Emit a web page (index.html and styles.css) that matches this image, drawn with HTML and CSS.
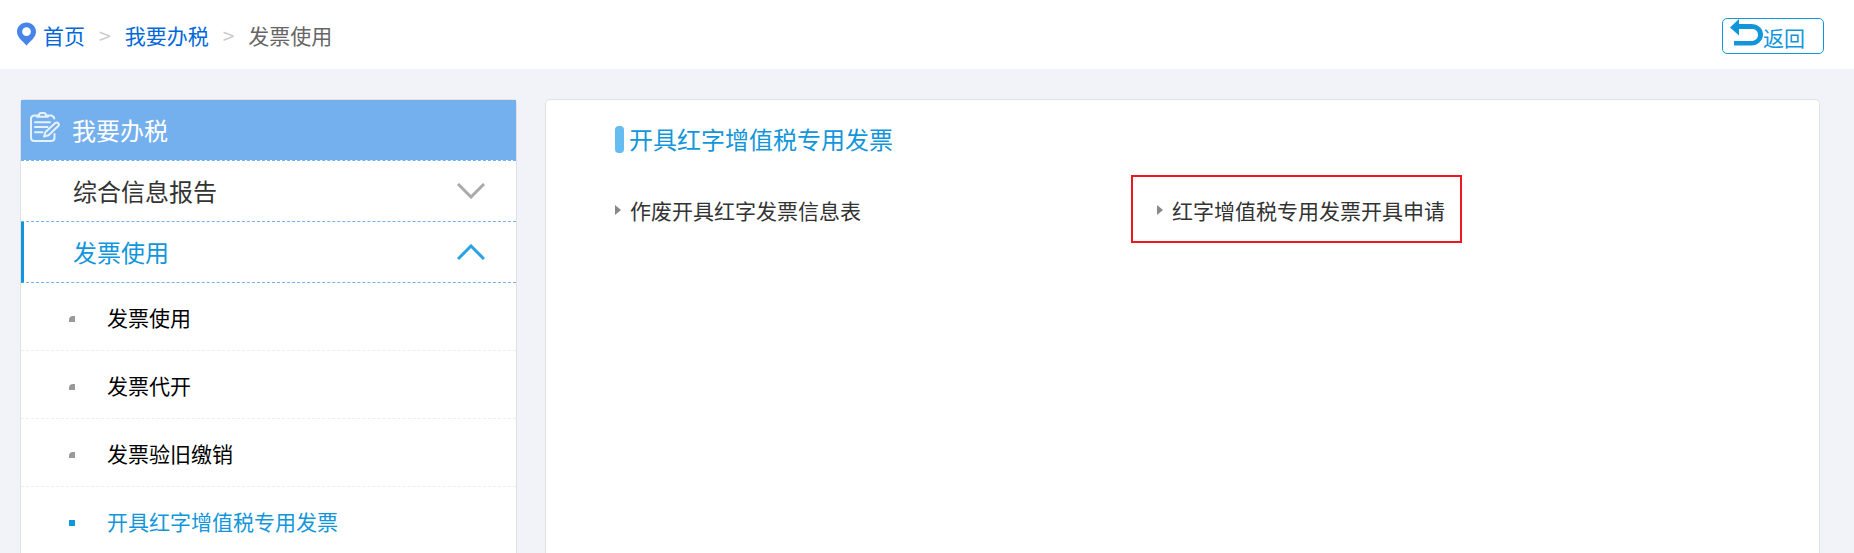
FILE: index.html
```html
<!DOCTYPE html>
<html lang="zh-CN">
<head>
<meta charset="utf-8">
<title>发票使用</title>
<link rel="stylesheet" href="styles.css">
</head>
<body>
<header class="topbar">
  <nav class="breadcrumb" aria-label="breadcrumb">
    <svg class="pin" viewBox="0 0 20 24" aria-hidden="true"><path fill="#4785ea" fill-rule="evenodd" d="M10 0C4.400 0 0 4.300 0 9.600 0 15.200 5.500 19.200 10 24c4.500-4.800 10-8.800 10-14.400C20 4.300 15.600 0 10 0zm0 4.900a4.600 4.600 0 1 1 0 9.200 4.600 4.600 0 0 1 0-9.200z"/></svg>
    <a href="#">首页</a>
    <span class="sep">&gt;</span>
    <a href="#">我要办税</a>
    <span class="sep">&gt;</span>
    <span class="current">发票使用</span>
  </nav>
  <button class="back" type="button">
    <svg class="back-icon" viewBox="0 0 33 27" aria-hidden="true"><path fill="#1296db" d="M0 8.500 9 0v5h12c7 0 12 4.500 12 10.500S28 26.500 21 26.500H4V22h17c4.500 0 7-3 7-6.300C28 12 25.500 10 21 10H9v6.500z"/></svg>
    <span class="back-text">返回</span>
  </button>
</header>
<div class="layout">
  <aside class="panel sidebar">
    <h2 class="side-title">
      <svg class="clip" viewBox="0 0 30 30" fill="none" stroke="#e6f1fd" stroke-width="2" stroke-linecap="round" stroke-linejoin="round" aria-hidden="true"><path d="M7 3.500H4.500Q1 3.500 1 7v18.500Q1 29 4.500 29h16.500q3.500 0 3.500-3.500V22M18 3.500h2.500Q23.500 3.500 24.300 6.500M7 4.800V3.500h2q0-2.500 2-2.500h3q2 0 2 2.500h2v1.300zM5 10.300h15M5 15h12.500M5 20.300h7.500M14 24.500l1.500-4.500L25.500 10.800q1.500-.8 2.700.4t.3 2.600L18.500 23.300z"/></svg>
      <span>我要办税</span>
    </h2>
    <button class="group" type="button">
      <span>综合信息报告</span>
      <svg class="chevron" viewBox="0 0 28 16" aria-hidden="true"><path d="M1 1l13 13L27 1"/></svg>
    </button>
    <button class="group open" type="button" aria-expanded="true">
      <span>发票使用</span>
      <svg class="chevron" viewBox="0 0 28 16" aria-hidden="true"><path d="M1 15L14 2 27 15"/></svg>
    </button>
    <ul class="sub">
      <li><a href="#">发票使用</a></li>
      <li><a href="#">发票代开</a></li>
      <li><a href="#">发票验旧缴销</a></li>
      <li><a class="active" href="#">开具红字增值税专用发票</a></li>
    </ul>
  </aside>
  <main class="panel content">
    <h1 class="title">开具红字增值税专用发票</h1>
    <ul class="links">
      <li><a href="#">作废开具红字发票信息表</a></li>
      <li><a class="marked" href="#">红字增值税专用发票开具申请</a></li>
    </ul>
  </main>
</div>
</body>
</html>
```
FILE: styles.css
```css
* { box-sizing: border-box; }
html, body { height: 100%; }
body {
  margin: 0;
  display: flex;
  flex-direction: column;
  overflow: hidden;
  background: #f2f3f8;
  color: #333;
  font: 21px/30px "Noto Sans CJK SC", sans-serif;
}
h1, h2, ul { margin: 0; padding: 0; font-weight: 400; }
ul { list-style: none; }
a { color: inherit; text-decoration: none; }
button { font: inherit; color: inherit; background: none; border: 0; padding: 0; cursor: pointer; }
svg { display: block; flex: none; }

.topbar {
  display: flex;
  justify-content: space-between;
  align-items: center;
  flex: none;
  height: 69px;
  padding: 2px 30px 0 17px;
  background: #fff;
}
.breadcrumb { display: flex; align-items: center; gap: 14px; padding-bottom: 2px; }
.breadcrumb a { color: #0268da; }
.pin { width: 19px; height: 24px; margin: 0 -7px 2px 0; }
.sep { color: #ccc; }
.current { color: #666; }
.back {
  display: flex;
  width: 102px;
  height: 36px;
  padding-left: 7px;
  border: 1px solid #1296db;
  border-radius: 5px;
  color: #1296db;
}
.back-icon { width: 33px; height: 27px; }
.back-text { padding-top: 3px; }

.layout {
  flex: 1 0 auto;
  display: grid;
  grid-template-columns: 497fr 1275fr;
  gap: 28px;
  padding: 30px 34px 0 20px;
}
.panel {
  background: #fff;
  border: 1px solid #dfe1e2;
  border-bottom: 0;
  border-radius: 5px 5px 0 0;
}
.side-title, .group {
  display: flex;
  align-items: center;
  width: 100%;
  height: 61px;
  border-bottom: 1px dashed #75b0ee;
  font-size: 24px;
}
.side-title {
  gap: 12px;
  padding-left: 9px;
  background: #75b0ee;
  background-clip: padding-box;
  color: #fff;
}
.clip { width: 30px; height: 30px; margin-bottom: 6px; }
.group { justify-content: space-between; padding: 0 31px 0 52px; }
.chevron { width: 28px; height: 16px; fill: none; stroke: #aaa; stroke-width: 3; }
.open { padding-left: 49px; border-left: 3px solid #1296db; color: #1296db; }
.open .chevron { stroke: #2ba3e2; }

.sub { color: #000; }
.sub li { height: 68px; border-bottom: 1px dashed #eee; }
.sub a { display: flex; align-items: center; gap: 32px; height: 100%; padding-left: 48px; }
.sub a::before {
  content: "";
  width: 6px;
  height: 6px;
  margin-top: 4px;
  background: #999;
  border-top-left-radius: 4px;
}
.sub .active { color: #1296db; }
.sub .active::before { background: #1296db; border-radius: 0; }

.content { padding: 24px 120px 0 69px; }
.title {
  display: flex;
  align-items: center;
  gap: 5px;
  color: #1296db;
  font-size: 24px;
}
.title::before { content: ""; width: 9px; height: 27px; border-radius: 4px; background: #65bcf0; }
.links { display: grid; grid-template-columns: 1fr 1fr; margin-top: 37px; }
.links a { position: relative; display: inline-flex; align-items: center; gap: 9px; }
.links a::before {
  content: "";
  border: solid transparent;
  border-width: 5px 0 5px 6px;
  border-left-color: #888;
}
.marked::after {
  content: "";
  position: absolute;
  inset: -20px -17px -18px -26px;
  border: 2px solid #ee1720;
}
```
